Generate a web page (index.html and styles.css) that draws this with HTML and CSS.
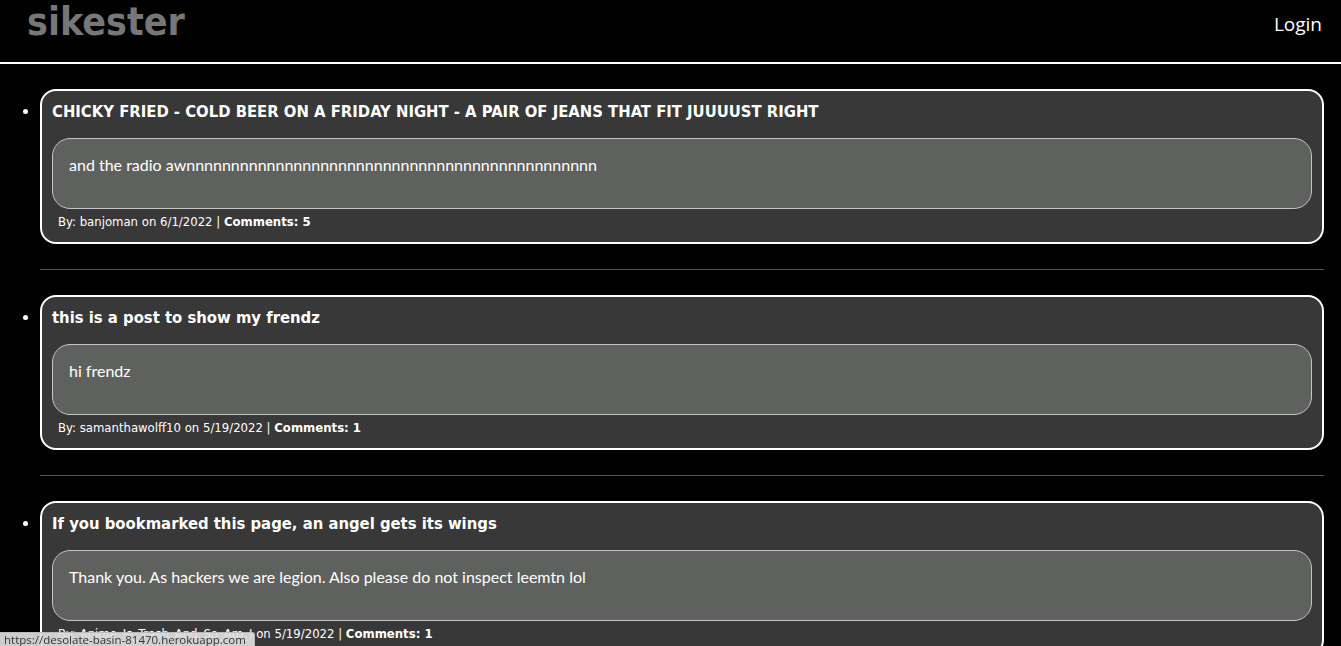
FILE: index.html
```html
<!DOCTYPE html>
<html>
<head>
<meta charset="utf-8">
<title>sikester</title>
<link rel="stylesheet" href="styles.css">
</head>
<body>
<header class="topbar">
  <a class="logo" href="#">sikester</a>
  <a class="login" href="#">Login</a>
</header>
<ul class="posts">
  <li class="post">
    <div class="card">
      <h3 class="title">CHICKY FRIED - COLD BEER ON A FRIDAY NIGHT - A PAIR OF JEANS THAT FIT JUUUUST RIGHT</h3>
      <div class="content">and the radio awnnnnnnnnnnnnnnnnnnnnnnnnnnnnnnnnnnnnnnnnnnnnnn</div>
      <p class="meta">By: banjoman on 6/1/2022 | <b>Comments: 5</b></p>
    </div>
    <hr class="sep">
  </li>
  <li class="post">
    <div class="card">
      <h3 class="title">this is a post to show my frendz</h3>
      <div class="content">hi frendz</div>
      <p class="meta">By: samanthawolff10 on 5/19/2022 | <b>Comments: 1</b></p>
    </div>
    <hr class="sep">
  </li>
  <li class="post">
    <div class="card">
      <h3 class="title">If you bookmarked this page, an angel gets its wings</h3>
      <div class="content">Thank you. As hackers we are legion. Also please do not inspect leemtn lol</div>
      <p class="meta">By: Anime_Is_Trash_And_So_Am_I on 5/19/2022 | <b>Comments: 1</b></p>
    </div>
    <hr class="sep">
  </li>
</ul>
<div class="status">https://desolate-basin-81470.herokuapp.com</div>
</body>
</html>
```
FILE: styles.css
```css
html, body {
  margin: 0;
  padding: 0;
  background: #000;
  color: #fff;
}
body {
  font-family: "DejaVu Sans Condensed", "DejaVu Sans", sans-serif;
}
.topbar {
  display: flex;
  justify-content: space-between;
  align-items: flex-start;
  height: 62px;
  border-bottom: 2px solid #fff;
  padding: 0 19px 0 27px;
}
.logo {
  color: #777;
  text-decoration: none;
  font-family: "DejaVu Sans Condensed", "DejaVu Sans", sans-serif;
  font-weight: bold;
  font-size: 39px;
  line-height: 44px;
}
.login {
  color: #fff;
  text-decoration: none;
  font-family: "Open Sans", sans-serif;
  font-size: 19px;
  line-height: 26px;
  margin-top: 11px;
}
.posts {
  margin: 25px 0 0 0;
  padding: 0 17px 0 40px;
}
.post::marker {
  font-size: 16px;
}
.card {
  background: #383838;
  border: 2px solid #fff;
  border-radius: 16px;
  padding: 11px 10px 12px 10px;
}
.title {
  margin: 0 0 16px 0;
  font-family: "DejaVu Sans Condensed", "DejaVu Sans", sans-serif;
  font-weight: bold;
  font-size: 16.5px;
  line-height: 20px;
}
.content {
  background: #5f615e;
  border: 1px solid #c4c4c4;
  border-radius: 18px;
  height: 71px;
  box-sizing: border-box;
  padding: 14px 16px;
  font-family: Lato, "Open Sans", sans-serif;
  font-size: 16px;
  line-height: 24px;
}
.meta {
  margin: 4px 0 0 6px;
  font-size: 13px;
  line-height: 17px;
}
.sep {
  border: 0;
  border-top: 1px solid #555;
  margin: 25px 0 25px 0;
}
.status {
  position: fixed;
  left: 0;
  bottom: 0;
  padding: 0 8px 0 4px;
  background: rgba(222, 222, 222, 0.92);
  border-top: 1px solid #bbb;
  border-right: 1px solid #bbb;
  border-top-right-radius: 3px;
  color: #333;
  font-family: "Open Sans", sans-serif;
  font-size: 11.5px;
  line-height: 14px;
  height: 13px;
  white-space: nowrap;
  overflow: hidden;
}
```
